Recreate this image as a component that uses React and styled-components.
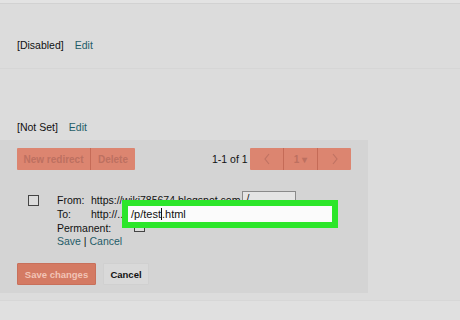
import React from 'react';
import styled, { createGlobalStyle } from 'styled-components';

const Global = createGlobalStyle`
  html, body {
    margin: 0;
    padding: 0;
    background: #dcdcdc;
    font-family: "Liberation Sans", Arial, sans-serif;
    font-size: 10px;
    color: #111;
    overflow: hidden;
  }
`;

const Page = styled.div`
  width: 460px;
  height: 320px;
  display: flex;
  flex-direction: column;
`;

const TopStrip = styled.div`
  height: 3px;
  background: #e3e3e3;
  border-bottom: 1px solid #d2d2d2;
`;

const Setting = styled.div`
  height: ${p => p.h}px;
  padding: 0 17px;
  display: flex;
  align-items: flex-end;
  gap: 11px;
  padding-bottom: ${p => p.pb}px;
  box-sizing: border-box;
  border-bottom: ${p => (p.line ? '1px solid #d6d6d6' : 'none')};
  font-size: 10.5px;
`;

const Link = styled.span`
  color: #1f5c68;
`;

const Panel = styled.div`
  width: 368px;
  height: 153px;
  background: #d4d4d4;
  box-sizing: border-box;
  padding: 8px 17px 0;
`;

const Toolbar = styled.div`
  display: flex;
  align-items: center;
  height: 22px;
`;

const BtnGroup = styled.div`
  display: flex;
  height: 22px;
  background: #dc8570;
  border-radius: 1px;
`;

const GroupBtn = styled.div`
  width: ${p => p.w}px;
  display: flex;
  align-items: center;
  justify-content: center;
  color: #bd7060;
  font-size: 10px;
  font-weight: bold;
  border-left: ${p => (p.first ? 'none' : '1px solid #c56b57')};
`;

const Count = styled.div`
  margin-left: 77px;
  width: 46px;
  font-size: 10.5px;
  white-space: nowrap;
`;

const Pager = styled(BtnGroup)`
  margin-left: 2px;
`;

const Form = styled.div`
  display: grid;
  grid-template-columns: 40px 34px auto;
  margin-top: 23px;
  font-size: 10.5px;
  position: relative;
`;

const Box = styled.div`
  width: 9px;
  height: 9px;
  border: 1px solid #444;
  background: #dcdcdc;
  margin: ${p => p.m};
`;

const Cell = styled.div`
  display: flex;
  align-items: center;
  gap: 2px;
  height: ${p => p.h || 14}px;
  white-space: pre;
`;

const SmallInput = styled.div`
  width: 54px;
  height: 14px;
  border: 1px solid #8a8a8a;
  background: #e4e4e4;
  box-sizing: border-box;
  padding-left: 3px;
  line-height: 12px;
  margin-top: -4px;
`;

const Highlight = styled.div`
  position: absolute;
  left: 105px;
  top: 7px;
  width: 216px;
  height: 28px;
  box-sizing: border-box;
  border: 6px solid #2ce62a;
  background: #fbfbfb;
  display: flex;
  align-items: center;
  padding-left: 3px;
  font-size: 11px;
`;

const Caret = styled.span`
  display: inline-block;
  width: 1px;
  height: 12px;
  background: #111;
`;

const Actions = styled.div`
  display: flex;
  gap: 7px;
  margin-top: 16px;
`;

const ActionBtn = styled.div`
  height: 22px;
  width: ${p => p.w}px;
  box-sizing: border-box;
  display: flex;
  align-items: center;
  justify-content: center;
  font-size: 9.5px;
  font-weight: bold;
  border-radius: 1px;
  background: ${p => (p.primary ? '#d47a63' : '#d9d9d9')};
  color: ${p => (p.primary ? '#f2c4b6' : '#111')};
  border: 1px solid ${p => (p.primary ? '#c8705b' : '#d0d0d0')};
`;

const Bottom = styled.div`
  margin-top: 7px;
  flex: 1;
  background: #e0e0e0;
  border-top: 1px solid #d7d7d7;
`;

const Chevron = ({ dir }) => (
  <svg width="8" height="12" viewBox="0 0 8 12">
    <path
      d={dir === 'left' ? 'M6 1 L2 6 L6 11' : 'M2 1 L6 6 L2 11'}
      fill="none"
      stroke="#c07363"
      strokeWidth="1.2"
    />
  </svg>
);

export default function App() {
  return (
    <Page>
      <Global />
      <TopStrip />
      <Setting h={65} pb={17} line>
        <span>[Disabled]</span>
        <Link>Edit</Link>
      </Setting>
      <Setting h={71} pb={7}>
        <span>[Not Set]</span>
        <Link>Edit</Link>
      </Setting>
      <Panel>
        <Toolbar>
          <BtnGroup>
            <GroupBtn w={73} first>New redirect</GroupBtn>
            <GroupBtn w={44}>Delete</GroupBtn>
          </BtnGroup>
          <Count>1-1 of 1</Count>
          <Pager>
            <GroupBtn w={33} first><Chevron dir="left" /></GroupBtn>
            <GroupBtn w={33}>1 ▾</GroupBtn>
            <GroupBtn w={33}><Chevron dir="right" /></GroupBtn>
          </Pager>
        </Toolbar>
        <Form>
          <Box m="2px 0 0 11px" />
          <Cell>From:</Cell>
          <Cell>
            https://wiki785674.blogspot.com
            <SmallInput>/</SmallInput>
          </Cell>
          <div />
          <Cell>To:</Cell>
          <Cell>http://...</Cell>
          <div />
          <Cell>Permanent:</Cell>
          <Cell>
            <Box m="-4px 0 0 43px" />
          </Cell>
          <div />
          <Cell h={12}>
            <span><Link>Save</Link> | <Link>Cancel</Link></span>
          </Cell>
          <div />
          <Highlight>
            /p/test<Caret />.html
          </Highlight>
        </Form>
        <Actions>
          <ActionBtn primary w={79}>Save changes</ActionBtn>
          <ActionBtn w={46}>Cancel</ActionBtn>
        </Actions>
      </Panel>
      <Bottom />
    </Page>
  );
}
